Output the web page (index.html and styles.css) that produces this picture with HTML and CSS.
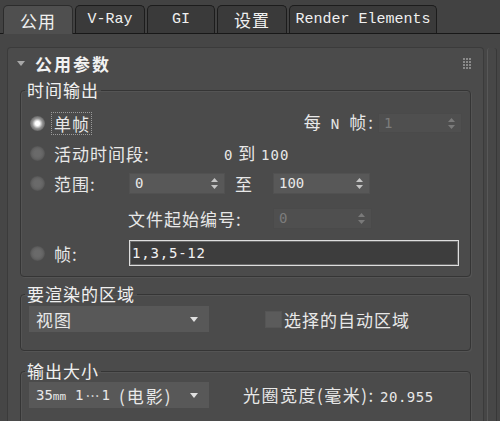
FILE: index.html
```html
<!DOCTYPE html>
<html lang="zh-CN">
<head>
<meta charset="utf-8">
<title>公用参数</title>
<link rel="stylesheet" href="styles.css">
</head>
<body>
<div class="tabs">
  <div class="tab active">公用</div>
  <div class="tab latin">V-Ray</div>
  <div class="tab latin w68">GI</div>
  <div class="tab">设置</div>
  <div class="tab latin wide">Render Elements</div>
</div>

<div class="main">
  <div class="rollout">
    <div class="rollout-head">
      <span class="caret"></span>
      <span class="rollout-title">公用参数</span>
      <svg class="grip" width="8" height="11" viewBox="0 0 8 11">
        <g fill="#8a8a8a">
          <rect x="0" y="0" width="2" height="2"/><rect x="3" y="0" width="2" height="2"/><rect x="6" y="0" width="2" height="2"/>
          <rect x="0" y="3" width="2" height="2"/><rect x="3" y="3" width="2" height="2"/><rect x="6" y="3" width="2" height="2"/>
          <rect x="0" y="6" width="2" height="2"/><rect x="3" y="6" width="2" height="2"/><rect x="6" y="6" width="2" height="2"/>
          <rect x="0" y="9" width="2" height="2"/><rect x="3" y="9" width="2" height="2"/><rect x="6" y="9" width="2" height="2"/>
        </g>
      </svg>
    </div>

    <fieldset class="group group-time">
      <legend>时间输出</legend>

      <div class="row">
        <span class="radio on"></span>
        <span class="lbl focus">单帧</span>
        <span class="every">每 <span class="latin">N</span> 帧:</span>
        <div class="spin disabled every-spin"><span class="val">1</span><svg class="arrows" width="7" height="11" viewBox="0 0 7 11"><path d="M3.5 0 7 4H0z M0 7h7l-3.5 4z"/></svg></div>
      </div>

      <div class="row">
        <span class="radio"></span>
        <span class="lbl lbl-wide">活动时间段:</span>
        <span class="span-range"><span class="num">0</span> 到 <span class="num">100</span></span>
      </div>

      <div class="row">
        <span class="radio"></span>
        <span class="lbl">范围:</span>
        <div class="spin range-spin"><span class="val">0</span><svg class="arrows" width="7" height="11" viewBox="0 0 7 11"><path d="M3.5 0 7 4H0z M0 7h7l-3.5 4z"/></svg></div>
        <span class="to">至</span>
        <div class="spin range-spin end"><span class="val">100</span><svg class="arrows" width="7" height="11" viewBox="0 0 7 11"><path d="M3.5 0 7 4H0z M0 7h7l-3.5 4z"/></svg></div>
      </div>

      <div class="row row-gap">
        <span class="lbl file-lbl">文件起始编号:</span>
        <div class="spin disabled file-spin"><span class="val">0</span><svg class="arrows" width="7" height="11" viewBox="0 0 7 11"><path d="M3.5 0 7 4H0z M0 7h7l-3.5 4z"/></svg></div>
      </div>

      <div class="row row-gap">
        <span class="radio"></span>
        <span class="lbl">帧:</span>
        <div class="text-field">1,3,5-12</div>
      </div>
    </fieldset>

    <fieldset class="group group-area">
      <legend>要渲染的区域</legend>
      <div class="row row-drop">
        <div class="drop"><span class="val">视图</span><span class="drop-arrow"></span></div>
        <span class="check"></span>
        <span class="check-lbl">选择的自动区域</span>
      </div>
    </fieldset>

    <fieldset class="group group-size">
      <legend>输出大小</legend>
      <div class="row row-drop">
        <div class="drop"><span class="val"><span class="num">35<small>mm</small></span><span class="ratio"><span class="num">1</span><span class="dots">⋯</span><span class="num">1</span></span><span class="film">(电影)</span></span><span class="drop-arrow"></span></div>
        <span class="aperture">光圈宽度(毫米): <span class="num">20.955</span></span>
      </div>
      <div class="row"></div>
    </fieldset>
  </div>
  <div class="scroll"></div>
</div>
</body>
</html>
```

FILE: styles.css
```css
html, body {
  margin: 0;
  padding: 0;
}

body {
  width: 500px;
  height: 421px;
  overflow: hidden;
  background: #464646;
  color: #e8e8e8;
  font-family: "Noto Sans CJK SC", sans-serif;
  font-size: 17px;
  line-height: 1;
}

.latin {
  font-family: "Liberation Mono", "DejaVu Sans Mono", monospace;
  font-size: 15px;
}

.num {
  font-family: "DejaVu Sans Mono", monospace;
  font-size: 14px;
}

/* ---------- tab strip ---------- */
.tabs {
  display: flex;
  gap: 2px;
  height: 28px;
  padding: 5px 0 0 3px;
  background: #424242;
  border-bottom: 1px solid #181818;
}

.tab {
  box-sizing: border-box;
  width: 70px;
  height: 28px;
  display: flex;
  align-items: center;
  justify-content: center;
  background: #3a3a3a;
  border: 1px solid #1c1c1c;
  border-bottom: none;
  border-radius: 5px 5px 0 0;
  letter-spacing: 1px;
  color: #f0f0f0;
}

.tab.w68 { width: 68px; }
.tab.wide { width: 148px; letter-spacing: 0; }
.tab.latin { letter-spacing: 0; }

.tab.active {
  height: 29px;
  margin-bottom: -1px;
  background: #4f4f4f;
  border-color: #2c2c2c;
}

/* ---------- rollout ---------- */
.main {
  display: flex;
  gap: 3px;
  padding: 13px 0 0 7px;
}

.rollout {
  box-sizing: border-box;
  width: 477px;
  height: 380px;
  background: #4b4b4b;
  border: 1px solid #3b3b3b;
  border-bottom: none;
  border-radius: 4px 4px 0 0;
}

.scroll {
  box-sizing: border-box;
  width: 10px;
  height: 380px;
  margin-top: 1px;
  background: #474747;
  border-left: 1px solid #585858;
  border-right: 1px solid #383838;
  border-radius: 3px 3px 0 0;
}

.rollout-head {
  display: flex;
  align-items: center;
  height: 30px;
  padding: 0 12px 0 9px;
  margin-bottom: 3px;
}

.caret {
  width: 0;
  height: 0;
  border-left: 4px solid transparent;
  border-right: 4px solid transparent;
  border-top: 5px solid #a8a8a8;
  margin-right: 10px;
}

.rollout-title {
  font-weight: bold;
  letter-spacing: 2px;
  color: #f2f2f2;
}

.grip {
  margin-left: auto;
}

/* ---------- group boxes ---------- */
.group {
  margin: 0 12px;
  padding: 0 8px 8px;
  border: 1px solid #353535;
  border-radius: 4px;
  min-width: 0;
  box-shadow: 1px 1px 0 #545454, inset 1px 1px 0 #545454;
}

.group legend {
  padding: 0 2px;
  margin-left: -4px;
  line-height: 18px;
  letter-spacing: 1px;
  color: #f0f0f0;
}

.group-time {
  padding-top: 9px;
}

.group-area {
  margin-top: 8px;
  padding-top: 3px;
  padding-bottom: 18px;
}

.group-size {
  margin-top: 11px;
  padding-top: 2px;
}

.row {
  display: flex;
  align-items: center;
  height: 30px;
}

.row-gap { margin-top: 5px; }
.row-drop { height: 26px; }

/* ---------- radio buttons ---------- */
.radio {
  flex: none;
  width: 15px;
  height: 15px;
  margin: 0 9px 0 1px;
  border-radius: 50%;
  background: radial-gradient(circle, #6a6a6a 0 3px, #656565 5px, #5c5c5c 6.5px, #525252 7.5px);
}

.radio.on {
  background: radial-gradient(circle, #ffffff 0 2px, #e0e0e0 3px, #959595 5px, #666666 7.5px);
}

/* ---------- labels ---------- */
.lbl {
  flex: none;
  width: 75px;
  letter-spacing: 1px;
}

.lbl.focus {
  width: auto;
  padding: 3px 2px 3px 3px;
  margin-left: -3px;
  outline: 1px dotted #9a9a9a;
  outline-offset: -1px;
}

.lbl-wide { width: 170px; }

.every {
  margin-left: auto;
  letter-spacing: 2px;
  word-spacing: 2px;
}

.span-range { letter-spacing: 1px; }

.to {
  margin: 0 21px 0 10px;
}

.file-lbl {
  width: 145px;
  margin-left: 99px;
}

/* ---------- spinners ---------- */
.spin {
  box-sizing: border-box;
  display: flex;
  align-items: center;
  height: 21px;
  padding: 0 6px 0 5px;
  background: #585858;
  border: 1px solid #515151;
  font-family: "DejaVu Sans Mono", monospace;
  font-size: 14px;
}

.spin .val { flex: 1; }
.spin .arrows { fill: #c4c4c4; }

.spin.disabled {
  background: #4f4f4f;
  border-color: #4a4a4a;
  color: #7c7c7c;
}

.spin.disabled .arrows { fill: #7a7a7a; }

.every-spin { width: 84px; height: 20px; margin-left: 3px; }
.range-spin { width: 96px; }
.range-spin.end { width: 97px; }
.file-spin { width: 99px; }

/* ---------- text field ---------- */
.text-field {
  box-sizing: border-box;
  width: 330px;
  height: 26px;
  display: flex;
  align-items: center;
  padding-left: 2px;
  background: #3d3d3d;
  border: 1px solid #dedede;
  box-shadow: inset 0 0 0 1px #6a6a6a;
  font-family: "DejaVu Sans Mono", monospace;
  font-size: 14px;
  letter-spacing: 0.8px;
  color: #f2f2f2;
}

/* ---------- dropdowns ---------- */
.drop {
  box-sizing: border-box;
  flex: none;
  width: 180px;
  height: 26px;
  display: flex;
  align-items: center;
  padding: 0 11px 0 7px;
  background: #585858;
  letter-spacing: 1px;
}

.drop .val {
  flex: 1;
  display: flex;
  align-items: center;
  white-space: nowrap;
}

.drop .num { letter-spacing: 0; }
.drop small { font-size: 11px; }

.ratio {
  display: flex;
  align-items: center;
  margin-left: 9px;
}

.dots {
  font-size: 14px;
  letter-spacing: 0;
  margin: 0 2px;
}

.film {
  margin-left: 9px;
  letter-spacing: 2px;
}

.drop-arrow {
  width: 0;
  height: 0;
  border-left: 4px solid transparent;
  border-right: 4px solid transparent;
  border-top: 5px solid #e0e0e0;
}

/* ---------- checkbox ---------- */
.check {
  flex: none;
  width: 17px;
  height: 17px;
  margin-left: 56px;
  background: #5b5b5b;
  box-shadow: inset 0 0 0 1px #555;
}

.check-lbl {
  margin-left: 2px;
  letter-spacing: 1px;
}

.aperture {
  margin-left: 34px;
  letter-spacing: 1.5px;
}

.aperture .num { letter-spacing: 0.5px; }
```
